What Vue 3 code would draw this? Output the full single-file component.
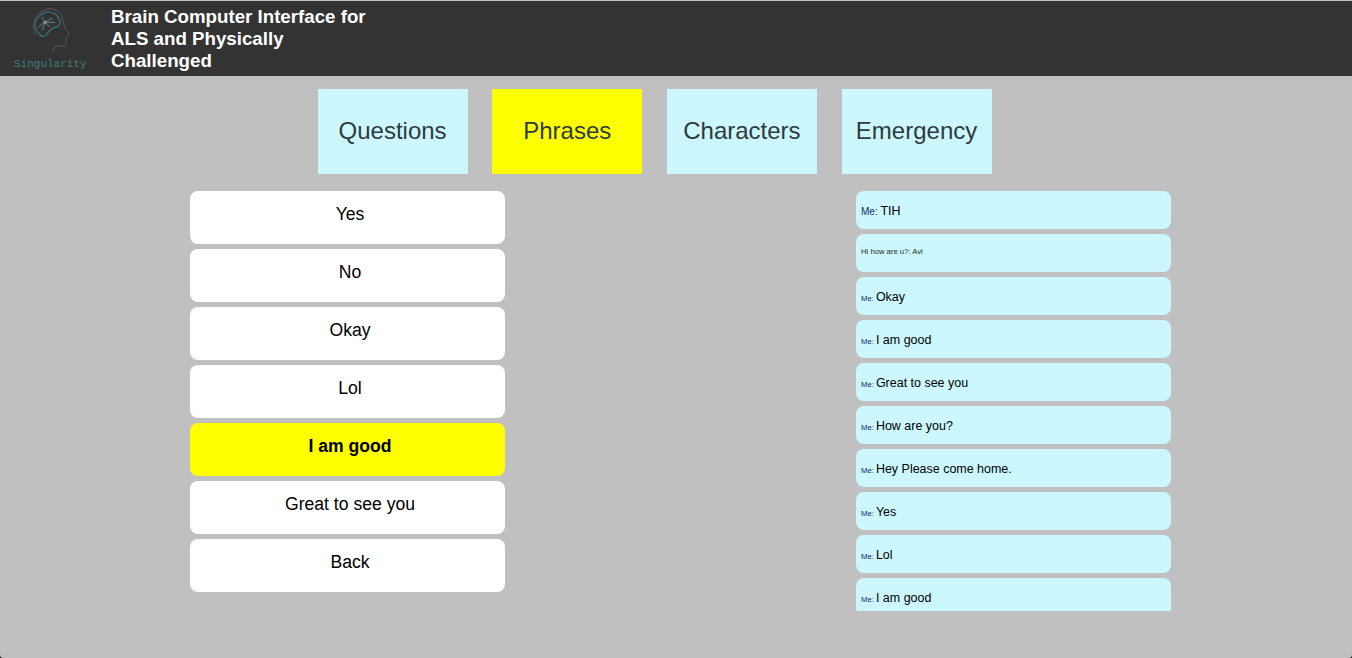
<script setup>
const tabs = [
  { label: 'Questions' },
  { label: 'Phrases', active: true },
  { label: 'Characters' },
  { label: 'Emergency' },
]
const options = [
  { label: 'Yes' },
  { label: 'No' },
  { label: 'Okay' },
  { label: 'Lol' },
  { label: 'I am good', active: true },
  { label: 'Great to see you' },
  { label: 'Back' },
]
const msgs = ['Okay', 'I am good', 'Great to see you', 'How are you?', 'Hey Please come home.', 'Yes', 'Lol', 'I am good']
</script>

<template>
  <div class="page">
    <header class="top">
      <div class="logo">
        <svg class="mark" width="50" height="50" viewBox="0 0 150 150" fill="none">
          <path d="M30 88 C22 70 24 48 36 32 C50 14 72 8 90 14 C106 20 114 34 114 50 C116 62 122 72 132 88 C130 94 124 96 122 100 C124 108 126 116 120 122 C110 124 98 122 90 125 C86 130 85 135 85 142" stroke="#55595b" stroke-width="3"/>
          <path d="M30 62 C30 44 42 28 62 22 C80 18 98 28 104 44 C108 56 102 66 88 68 C78 70 72 78 64 90 C58 98 48 94 42 86 C36 80 30 72 30 62 Z" stroke="#3f7486" stroke-width="3.4"/>
          <path d="M38 68 L58 52 L82 40 M50 36 L60 52 L74 66 M60 52 L52 76 M60 52 L90 52" stroke="#6f8b94" stroke-width="2.6"/>
          <circle cx="60" cy="52" r="5" fill="#7d98a0"/>
        </svg>
        <span class="brand">Singularity</span>
      </div>
      <h1 class="title">Brain Computer Interface for ALS and Physically Challenged</h1>
    </header>
    <nav class="tabs">
      <div v-for="t in tabs" :key="t.label" class="tab" :class="{ on: t.active }">{{ t.label }}</div>
    </nav>
    <main class="body">
      <section class="options">
        <div v-for="o in options" :key="o.label" class="opt" :class="{ on: o.active }">{{ o.label }}</div>
      </section>
      <section class="chat">
        <div class="msg"><span class="who big">Me: </span><span class="txt">TIH</span></div>
        <div class="msg"><span class="tiny">Hi how are u?: Avi</span></div>
        <div v-for="(m, i) in msgs" :key="i" class="msg"><span class="who">Me: </span><span class="txt">{{ m }}</span></div>
      </section>
    </main>
  </div>
</template>

<style>
html, body { margin: 0; background: #000; overflow: hidden; }
</style>

<style scoped>
.page {
  height: 658px;
  background: #c0c0c0;
  font-family: "Liberation Sans", Arial, sans-serif;
  border-bottom-left-radius: 3px;
  border-bottom-right-radius: 3px;
  overflow: hidden;
}
.top {
  margin-top: 1px;
  height: 75px;
  background: #333;
  display: flex;
}
.logo {
  width: 111px;
  flex: none;
  display: flex;
  flex-direction: column;
  align-items: flex-start;
  box-sizing: border-box;
  padding: 4px 0 0 14px;
}
.mark { margin-left: 11px; }
.brand {
  font-family: "Liberation Mono", monospace;
  font-size: 11px;
  line-height: 12px;
  margin-top: 3px;
  color: #3f7d7f;
}
.title {
  margin: 0;
  width: 260px;
  padding-top: 5px;
  font-size: 18.72px;
  line-height: 22px;
  font-weight: 700;
  color: #fff;
}
.tabs {
  display: flex;
  gap: 24.67px;
  padding: 13px 0 0 317.6px;
}
.tab {
  width: 150px;
  height: 85px;
  box-sizing: border-box;
  padding-bottom: 2px;
  background: #ccf7ff;
  color: #2f3a3c;
  font-size: 24px;
  display: flex;
  align-items: center;
  justify-content: center;
}
.tab.on { background: #ff0; }
.body {
  display: flex;
  padding: 17px 0 0 190px;
  gap: 351px;
  align-items: flex-start;
}
.options {
  width: 315px;
  display: flex;
  flex-direction: column;
  gap: 5px;
}
.opt {
  height: 53px;
  box-sizing: border-box;
  padding: 12px 0 0 5px;
  background: #fff;
  border-radius: 8px;
  font-size: 17.6px;
  line-height: 22px;
  text-align: center;
  color: #000;
}
.opt.on { background: #ff0; font-weight: 700; }
.chat {
  width: 315px;
  height: 420px;
  overflow: hidden;
  display: flex;
  flex-direction: column;
  gap: 5px;
}
.msg {
  flex: none;
  height: 38px;
  box-sizing: border-box;
  padding: 13px 5px 0;
  background: #ccf7ff;
  border-radius: 8px;
  font-size: 12.48px;
  line-height: 15px;
  color: #000;
}
.who { font-size: 7.68px; color: #0f2a66; }
.who.big { font-size: 10px; }
.tiny { display: block; margin-top: -1px; font-size: 7.68px; line-height: 11px; color: #1c2c20; }
</style>
